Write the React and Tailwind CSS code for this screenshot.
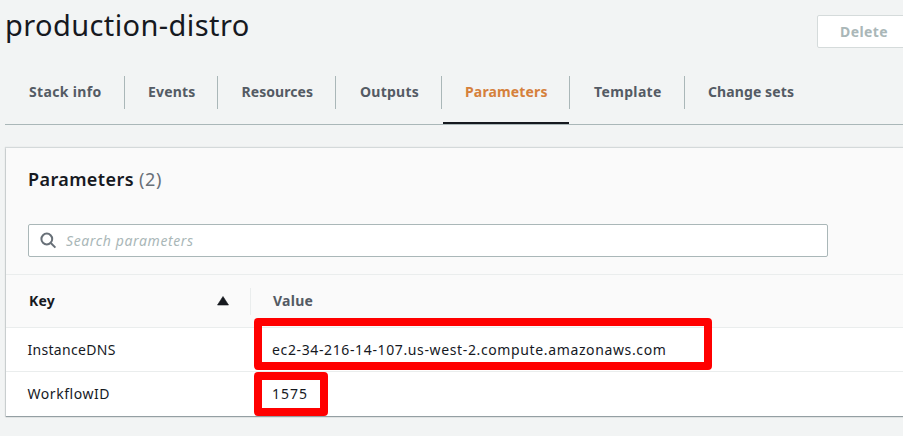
const tabs = [
  { label: "Stack info", cell: "w-[120px] pl-6", text: "tracking-[0.35px]" },
  { label: "Events", cell: "w-[93px] pl-[23px]", text: "tracking-[0.2px]" },
  { label: "Resources", cell: "w-[118px] pl-[23.5px]", text: "tracking-[0.05px]" },
  { label: "Outputs", cell: "w-[106px] pl-6", text: "tracking-[0.25px]" },
  { label: "Parameters", cell: "w-32 pl-[23px]", text: "tracking-[0.15px]", active: true },
  { label: "Template", cell: "w-[115px] pl-[24px]", text: "tracking-[0.35px]" },
  { label: "Change sets", cell: "w-[134px] pl-[23px]", text: "tracking-[0.1px]", last: true },
];

function Tab({ tab }) {
  return (
    <div className={`relative h-[33px] shrink-0 ${tab.cell} ${tab.last ? "" : "border-r border-[#aab7b8]"}`}>
      <span
        className={`block whitespace-nowrap text-[14px] leading-8 font-bold ${tab.text} ${
          tab.active ? "text-[#d5803b]" : "text-[#545b64]"
        }`}
      >
        {tab.label}
      </span>
      {tab.active && <div className="absolute left-px right-0 top-[46px] h-[2px] bg-[#16191f]" />}
    </div>
  );
}

export default function App() {
  return (
    <div className="h-[436px] w-[903px] overflow-hidden bg-[#f2f4f4] pl-[5px] font-['Noto_Sans',sans-serif] text-[#16191f]">
      <header className="flex h-[76px] justify-between">
        <h1 className="text-[29px] leading-[49px] tracking-[0.4px]">production-distro</h1>
        <button className="mt-[15px] h-[33px] w-[100px] -mr-[14px] shrink-0 rounded-[2px] border border-[#d5dbdb] bg-white pl-[22px] text-left text-[14px] leading-[31px] font-bold tracking-[0.4px] text-[#aab7b8]">
          Delete
        </button>
      </header>
      <nav className="flex h-[49px] border-b border-[#aab7b8]">
        {tabs.map((tab) => (
          <Tab key={tab.label} tab={tab} />
        ))}
      </nav>

      <section className="mt-[23px] ml-px h-[268px] w-[920px] bg-white shadow-[0_1px_1px_0_rgba(0,28,36,0.3),0_0_1px_1px_rgba(0,28,36,0.12)]">
        <div className="h-[127px] border-b border-[#eaeded] bg-[#fafafa] pl-[22px]">
          <h2 className="flex h-[76px] gap-[5px] text-[18px] leading-[62px]">
            <span className="font-semibold tracking-[0.4px]">Parameters</span>
            <span className="tracking-[0.7px] text-[#687078]">(2)</span>
          </h2>
          <div className="flex h-[33px] w-[800px] items-center rounded-[2px] border border-[#aab7b8] bg-white pl-[11px]">
            <svg width="17" height="17" viewBox="0 0 17 17" fill="none" stroke="#687078" strokeWidth="2">
              <circle cx="6.8" cy="7" r="5.4" />
              <path d="M10.8 11l4.6 4.6" />
            </svg>
            <span className="ml-[9px] text-[14px] leading-5 tracking-[0.62px] text-[#aab7b8] italic">Search parameters</span>
          </div>
        </div>
        <div className="flex h-[53px] items-center border-b border-[#eaeded] bg-[#fafafa] text-[14px] font-bold tracking-[0.25px]">
          <div className="flex h-[27px] w-[245px] items-center justify-between border-r border-[#eaeded] pr-[21px] pl-[23px]">
            <span className="pb-[2px]">Key</span>
            <svg width="12" height="10" viewBox="0 0 12 10" fill="#16191f">
              <path d="M6 .5L11.5 9H.5z" stroke="#16191f" strokeWidth=".6" strokeLinejoin="round" />
            </svg>
          </div>
          <span className="pb-[2px] pl-[22px] text-[#545b64]">Value</span>
        </div>
        <div className="flex h-11 items-center border-b border-[#eaeded] text-[14px]">
          <span className="w-[266px] pl-[21.5px] tracking-[0.3px]">InstanceDNS</span>
          <span className="relative">
            <span className="tracking-[0.63px]">ec2-34-216-14-107.us-west-2.compute.amazonaws.com</span>
            <span className="absolute top-[-21px] left-[-18px] h-[52px] w-[458px] rounded-[4px] border-8 border-[#ff0000]" />
          </span>
        </div>
        <div className="flex h-11 items-center pb-[2px] text-[14px]">
          <span className="w-[266px] pl-[21.5px] tracking-[0.55px]">WorkflowID</span>
          <span className="relative">
            <span className="tracking-[1px]">1575</span>
            <span className="absolute top-[-11px] left-[-18px] h-11 w-[74px] rounded-[4px] border-8 border-[#ff0000]" />
          </span>
        </div>
      </section>
    </div>
  );
}
